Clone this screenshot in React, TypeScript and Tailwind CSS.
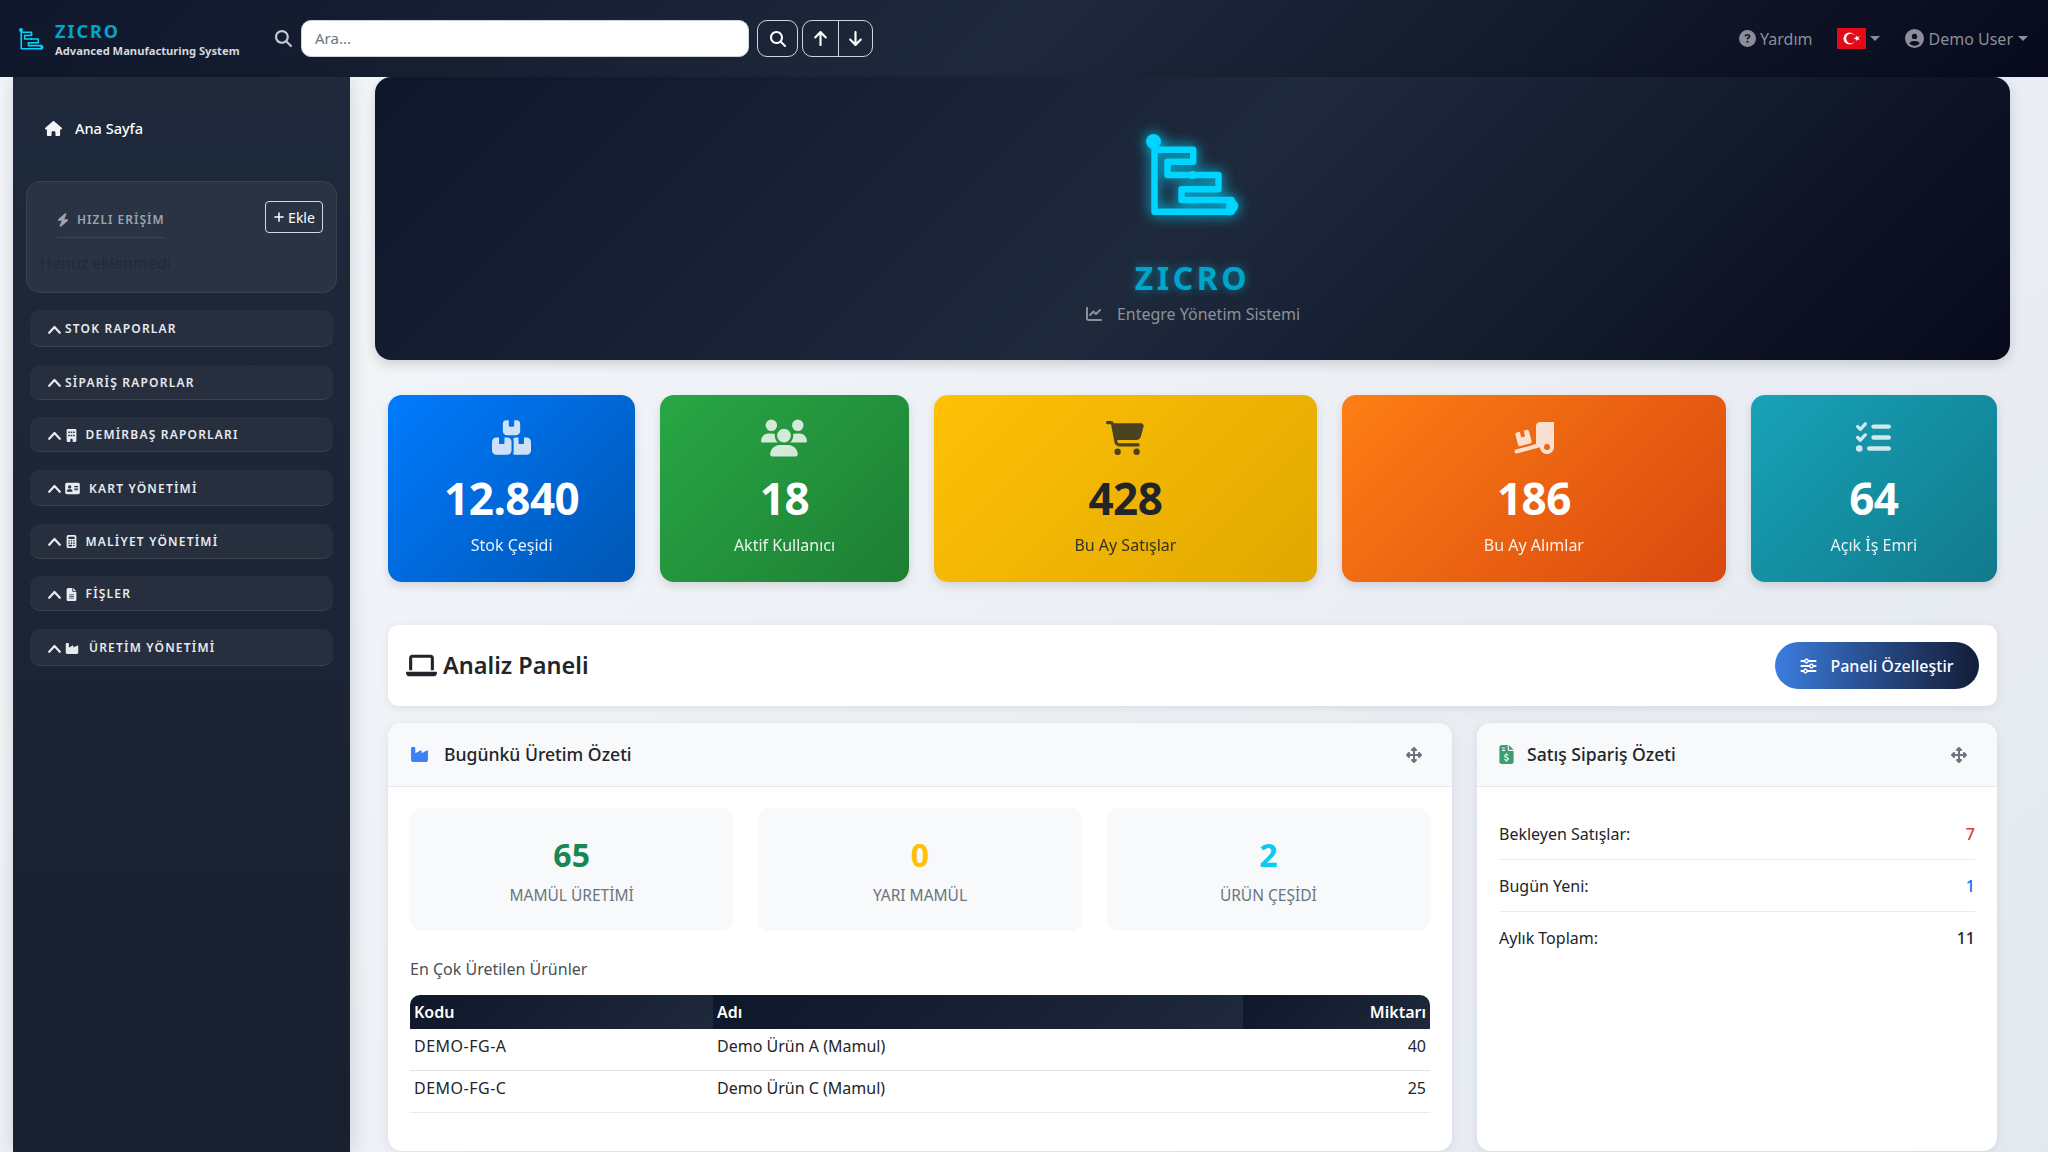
import React from 'react';
import {
  FaHouse, FaBolt, FaPlus, FaBuilding, FaAddressCard, FaCalculator, FaFileLines, FaIndustry,
  FaMagnifyingGlass, FaArrowUp, FaArrowDown, FaCircleQuestion, FaCircleUser, FaChartLine, FaBoxesStacked, FaUsers,
  FaCartShopping, FaTruckRampBox, FaListCheck, FaLaptop, FaSliders, FaFileInvoiceDollar, FaUpDownLeftRight,
} from 'react-icons/fa6';

function Logo({ className, sw = 6 }: { className?: string; sw?: number }) {
  return (
    <svg viewBox="142.5 30 100 90" className={className} fill="none" stroke="#00d4ff" strokeWidth={sw} strokeLinejoin="round" strokeLinecap="round">
      <circle cx="153" cy="41.5" r="7.5" fill="#00d4ff" stroke="none" />
      <path d="M154 47 V111.7 H231 V100 H181 V89.3 H218 V75 H167 V61.7 H192.7 V49.7 H154" />
      <path d="M229 100 Q240 106 229 112 Z" fill="#00d4ff" />
      <circle cx="192" cy="75" r="4" fill="#00d4ff" stroke="none" />
    </svg>
  );
}

function Chevron() {
  return (
    <svg viewBox="0 0 13 9" className="w-[13px] h-[9px] mr-[4px] shrink-0" fill="none" stroke="currentColor" strokeWidth="2.2" strokeLinecap="round" strokeLinejoin="round">
      <path d="M1.2 7.8 L6.5 2 L11.8 7.8" />
    </svg>
  );
}

function Caret() {
  return <span className="inline-block w-0 h-0 border-t-[5px] border-x-[5px] border-x-transparent border-t-current" />;
}

const menu: { label: string; icon?: React.ReactNode; h: string; mr?: string }[] = [
  { label: 'STOK RAPORLAR', h: 'h-[37px]' },
  { label: 'SİPARİŞ RAPORLAR', h: 'h-[35px]' },
  { label: 'DEMİRBAŞ RAPORLARI', icon: <FaBuilding className="h-[13px] w-auto" />, h: 'h-[35px]', mr: 'mr-[7.5px]' },
  { label: 'KART YÖNETİMİ', icon: <FaAddressCard className="h-[13px] w-[15px]" />, h: 'h-[36px]', mr: 'mr-[9px]' },
  { label: 'MALİYET YÖNETİMİ', icon: <FaCalculator className="h-[13px] w-auto" />, h: 'h-[35px]', mr: 'mr-[7.5px]' },
  { label: 'FİŞLER', icon: <FaFileLines className="h-[13px] w-auto" />, h: 'h-[35px]', mr: 'mr-[7.5px]' },
  { label: 'ÜRETİM YÖNETİMİ', icon: <FaIndustry className="h-[13px] w-[14px]" />, h: 'h-[37px]', mr: 'mr-[10px]' },
];

const stats = [
  { v: '12.840', l: 'Stok Çeşidi', icon: <FaBoxesStacked className="h-[39px] w-auto" />, cls: 'bg-[linear-gradient(135deg,#007bff,#0056b3)] text-white' },
  { v: '18', l: 'Aktif Kullanıcı', icon: <FaUsers className="h-[46px] w-auto" />, cls: 'bg-[linear-gradient(135deg,#28a745,#1e7e34)] text-white' },
  { v: '428', l: 'Bu Ay Satışlar', icon: <FaCartShopping className="h-[38px] w-auto" />, cls: 'bg-[linear-gradient(135deg,#ffc107,#e0a800)] text-[#212529]' },
  { v: '186', l: 'Bu Ay Alımlar', icon: <FaTruckRampBox className="h-[40px] w-auto" />, cls: 'bg-[linear-gradient(135deg,#fd7e14,#d9480f)] text-white' },
  { v: '64', l: 'Açık İş Emri', icon: <FaListCheck className="h-[35px] w-auto" />, cls: 'bg-[linear-gradient(135deg,#17a2b8,#117a8b)] text-white' },
];

function Th({ children, className }: { children: React.ReactNode; className?: string }) {
  return (
    <th className={`bg-[linear-gradient(135deg,#0f172a,#1e293b)] px-[4px] font-semibold text-white text-[16px] ${className ?? ''}`}>{children}</th>
  );
}

export default function App() {
  return (
    <div className="h-screen w-full overflow-hidden flex flex-col bg-[linear-gradient(135deg,#f5f7fa,#e4e9f0)] font-['Noto_Sans','Open_Sans',sans-serif] text-[#212529]">
      <nav className="h-[77px] shrink-0 flex items-center bg-[linear-gradient(135deg,#0f172a,#1e293b_50%,#060a1c)] pl-[18px] pr-[20px]">
        <Logo className="w-[27px] h-[24px] mr-[10px]" sw={6} />
        <div className="w-[220px] leading-none pt-[2px]">
          <div className="text-[18px] font-bold tracking-[2px] text-[#00a5cc] leading-[20px]">ZICRO</div>
          <div className="text-[11.2px] font-bold text-[#d5d8dc] leading-[14px] mt-[3px] whitespace-nowrap">Advanced Manufacturing System</div>
        </div>
        <FaMagnifyingGlass className="w-[17px] h-[17px] text-[#c4c8cf] mr-[9px]" />
        <div className="w-[448px] h-[37px] bg-white rounded-[10px] border border-[#ced4da] flex items-center px-[13px] text-[15px] text-[#6c757d]">Ara...</div>
        <button className="ml-[8px] w-[41px] h-[37px] rounded-[10px] border border-[#d0d4da] flex items-center justify-center text-white"><FaMagnifyingGlass className="w-[16px] h-[16px]" /></button>
        <div className="ml-[4px] w-[71px] h-[37px] rounded-[10px] border border-[#d0d4da] flex text-white">
          <div className="w-[36px] border-r border-[#d0d4da] flex items-center justify-center"><FaArrowUp className="h-[17px] w-auto" /></div>
          <div className="flex-1 flex items-center justify-center"><FaArrowDown className="h-[17px] w-auto" /></div>
        </div>
        <div className="ml-auto flex items-center text-[16px] text-[#8b8e98]">
          <FaCircleQuestion className="w-[17px] h-[17px] mr-[4px]" />
          <span>Yardım</span>
          <div className="ml-[24px] w-[29px] h-[21px] bg-[#e30a17] flex items-center justify-center">
            <svg viewBox="0 0 29 21" className="w-[29px] h-[21px]">
              <circle cx="12.5" cy="10.5" r="6" fill="#fff" />
              <circle cx="14" cy="10.5" r="4.8" fill="#e30a17" />
              <polygon points="17.2,10.5 19.9,9.6 19.9,7.6 21.1,9.2 23.8,8.4 22.2,10.5 23.8,12.6 21.1,11.8 19.9,13.4 19.9,11.4" fill="#fff" transform="translate(-0.5 0) scale(0.98)" />
            </svg>
          </div>
          <span className="ml-[4px] flex"><Caret /></span>
          <FaCircleUser className="w-[19px] h-[19px] ml-[25px] mr-[5px]" />
          <span>Demo User</span>
          <span className="ml-[5px] flex"><Caret /></span>
        </div>
      </nav>
      <div className="flex-1 flex min-h-0 pl-[13px]">
        <aside className="w-[337px] shrink-0 bg-gradient-to-b from-[#1e293b] to-[#19202f] shadow-[0_0_20px_rgba(0,0,0,0.15)] px-[13px] pt-[38px]">
          <div className="flex items-center text-white text-[14.5px] font-medium h-[27px] pl-[19px]">
            <FaHouse className="h-[17px] w-auto mr-[13px] text-[#f3f4f6]" />Ana Sayfa
          </div>
          <div className="mt-[39px] h-[112px] rounded-[14px] bg-[#2a3344] border border-[#38414f] relative px-[30px] pt-[27px]">
            <div className="inline-flex items-center gap-[8px] border-b border-[#3b4454] pb-[8px] text-[12px] font-semibold tracking-[1px] text-[#9da3ae] whitespace-nowrap">
              <FaBolt className="h-[14px] w-[12px]" />HIZLI ERİŞİM
            </div>
            <div className="text-[16px] text-[#232a36] -ml-[17px] mt-[13px] whitespace-nowrap">Henüz eklenmedi</div>
            <button className="absolute right-[13px] top-[19px] w-[58px] h-[32px] rounded-[4px] border border-[#d5d8dc] text-white text-[14px] flex items-center justify-center gap-[3px]">
              <FaPlus className="w-[12px] h-[12px]" />Ekle
            </button>
          </div>
          <div className="mt-[17px] mx-[4px] flex flex-col gap-[17.7px]">
            {menu.map((m) => (
              <div key={m.label} className={`${m.h} rounded-[10px] bg-[#272f3f] border-b border-[#39424f] flex items-center pl-[18px] pt-[2px] text-[#e8eaee] text-[12px] font-semibold tracking-[1.2px] whitespace-nowrap`}>
                <Chevron />
                {m.icon && <span className={`${m.mr} flex`}>{m.icon}</span>}
                {m.label}
              </div>
            ))}
          </div>
        </aside>
        <main className="flex-1 min-w-0 pl-[25px] pr-[38px]">
          <section className="h-[283px] rounded-[16px] bg-[linear-gradient(135deg,#0f172a,#1e293b_50%,#060a1c)] flex flex-col items-center shadow-[0_4px_12px_rgba(0,0,0,0.15)]">
            <Logo className="w-[100px] h-[90px] mt-[53px] drop-shadow-[0_0_7px_#00d4ff]" sw={6.5} />
            <div className="mt-[39px] h-[38px] text-[32px] leading-[38px] font-bold tracking-[3.5px] text-[#00a5cc] [text-shadow:0_0_10px_rgba(0,212,255,0.5)]">ZICRO</div>
            <div className="mt-[5px] flex items-center text-[16px] leading-[24px] text-[#8b919c]">
              <FaChartLine className="h-[16px] w-[18px] mr-[14px]" />Entegre Yönetim Sistemi
            </div>
          </section>
          <div className="px-[13px]">
            <div className="mt-[35px] grid grid-cols-[247fr_248fr_383fr_383fr_246fr] gap-[25px]">
              {stats.map((s) => (
                <div key={s.l} className={`h-[187px] rounded-[14px] ${s.cls} flex flex-col items-center shadow-[0_4px_10px_rgba(0,0,0,0.12)]`}>
                  <span className="mt-[25px] h-[35px] opacity-80 flex items-center justify-center">{s.icon}</span>
                  <div className="mt-[18px] text-[44px] leading-[50px] font-bold tracking-[-0.5px]">{s.v}</div>
                  <div className="mt-[10px] text-[16px] leading-[24px] opacity-90">{s.l}</div>
                </div>
              ))}
            </div>
            <div className="mt-[43px] h-[81px] rounded-[10px] bg-white shadow-[0_2px_8px_rgba(0,0,0,0.08)] flex items-center justify-between pl-[18px] pr-[18px]">
              <div className="flex items-center text-[23.5px] font-semibold leading-none">
                <FaLaptop className="h-[31px] w-auto mr-[6px]" />Analiz Paneli
              </div>
              <button className="w-[204px] h-[47px] rounded-full bg-gradient-to-r from-[#3b7de0] to-[#131d38] text-white text-[16px] font-medium flex items-center justify-center gap-[13px]">
                <FaSliders className="w-[17px] h-[16px]" />Paneli Özelleştir
              </button>
            </div>
            <div className="mt-[17px] grid grid-cols-[1064px_520px] gap-[25px]">
              <div className="h-[428px] rounded-[14px] bg-white shadow-[0_2px_10px_rgba(0,0,0,0.08)]">
                <div className="h-[64px] rounded-t-[14px] bg-[#f8f9fa] border-b border-[#e6e8eb] flex items-center px-[22px] text-[17.6px] font-medium">
                  <FaIndustry className="w-[19px] h-[17px] mr-[15px] text-[#3b82f6]" />Bugünkü Üretim Özeti
                  <FaUpDownLeftRight className="w-[16px] h-[16px] ml-auto mr-[8px] text-[#6c757d]" />
                </div>
                <div className="px-[22px]">
                  <div className="mt-[21px] grid grid-cols-3 gap-[25px]">
                    {[
                      { v: '65', l: 'MAMÜL ÜRETİMİ', c: 'text-[#198754]' },
                      { v: '0', l: 'YARI MAMÜL', c: 'text-[#ffc107]' },
                      { v: '2', l: 'ÜRÜN ÇEŞİDİ', c: 'text-[#0dcaf0]' },
                    ].map((m) => (
                      <div key={m.l} className="h-[123px] rounded-[12px] bg-[#f8f9fa] flex flex-col items-center pt-[27px]">
                        <div className={`text-[32px] leading-[40px] font-bold ${m.c}`}>{m.v}</div>
                        <div className="mt-[8px] text-[15.5px] leading-[24px] text-[#6c757d]">{m.l}</div>
                      </div>
                    ))}
                  </div>
                  <div className="mt-[26px] text-[16px] leading-[24px] text-[#495057]">En Çok Üretilen Ürünler</div>
                  <table className="mt-[14px] w-full border-collapse text-[16px] table-fixed">
                    <thead>
                      <tr className="h-[34px]">
                        <Th className="w-[303px] text-left rounded-tl-[10px]">Kodu</Th>
                        <Th className="w-[530px] text-left">Adı</Th>
                        <Th className="text-right rounded-tr-[10px]">Miktarı</Th>
                      </tr>
                    </thead>
                    <tbody>
                      <tr className="h-[41px] border-b border-[#e2e4e8]"><td className="px-[4px] pb-[6px] tracking-[0.5px]">DEMO-FG-A</td><td className="px-[4px] pb-[6px]">Demo Ürün A (Mamul)</td><td className="px-[4px] pb-[6px] text-right">40</td></tr>
                      <tr className="h-[42px] border-b border-[#e9ebee]"><td className="px-[4px] pb-[6px] tracking-[0.5px]">DEMO-FG-C</td><td className="px-[4px] pb-[6px]">Demo Ürün C (Mamul)</td><td className="px-[4px] pb-[6px] text-right">25</td></tr>
                    </tbody>
                  </table>
                </div>
              </div>
              <div className="h-[428px] rounded-[14px] bg-white shadow-[0_2px_10px_rgba(0,0,0,0.08)]">
                <div className="h-[64px] rounded-t-[14px] bg-[#f8f9fa] border-b border-[#e6e8eb] flex items-center px-[22px] text-[17.6px] font-medium">
                  <FaFileInvoiceDollar className="w-[15px] h-[19px] mr-[13px] text-[#3c9d6e]" />Satış Sipariş Özeti
                  <FaUpDownLeftRight className="w-[16px] h-[16px] ml-auto mr-[8px] text-[#6c757d]" />
                </div>
                <div className="px-[22px] pt-[21px] text-[16px]">
                  {[
                    { k: 'Bekleyen Satışlar:', v: '7', c: 'text-[#dc3545]' },
                    { k: 'Bugün Yeni:', v: '1', c: 'text-[#0d6efd]' },
                    { k: 'Aylık Toplam:', v: '11', c: 'text-[#212529]' },
                  ].map((r, i) => (
                    <div key={r.k} className={`h-[52px] flex items-center justify-between ${i < 2 ? 'border-b border-[#e9ecef]' : ''}`}>
                      <span>{r.k}</span><span className={`font-medium ${r.c}`}>{r.v}</span>
                    </div>
                  ))}
                </div>
              </div>
            </div>
          </div>
        </main>
      </div>
    </div>
  );
}
